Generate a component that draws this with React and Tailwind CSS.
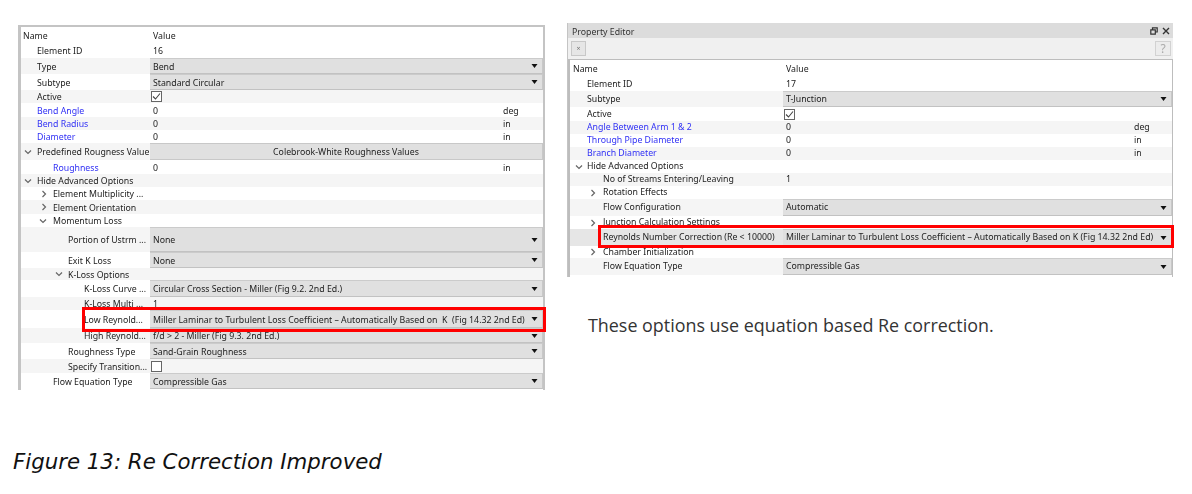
/* Figure 13: two property editor captures */
const MILLER_A = "Miller Laminar to Turbulent Loss Coefficient – Automatically Based on\u00a0 K\u00a0 (Fig 14.32 2nd Ed)";
const MILLER_B = "Miller Laminar to Turbulent Loss Coefficient – Automatically Based on K (Fig 14.32 2nd Ed)";

const leftRows = [
  { h: 15, name: "Element ID", pad: 16, val: "16" },
  { h: 16, name: "Type", pad: 16, val: "Bend", kind: "select", alt: 1 },
  { h: 16, name: "Subtype", pad: 16, val: "Standard Circular", kind: "select" },
  { h: 13, name: "Active", pad: 16, kind: "check", checked: true, alt: 1 },
  { h: 14, name: "Bend Angle", pad: 16, val: "0", unit: "deg", blue: true },
  { h: 13, name: "Bend Radius", pad: 16, val: "0", unit: "in", blue: true, alt: 1 },
  { h: 13, name: "Diameter", pad: 16, val: "0", unit: "in", blue: true },
  { h: 17, name: "Predefined Rougness Value", pad: 16, chevron: "down", chevronPad: 3, val: "Colebrook-White Roughness Values", kind: "button", alt: 1 },
  { h: 14, name: "Roughness", pad: 32, val: "0", unit: "in", blue: true },
  { h: 13, name: "Hide Advanced Options", pad: 16, chevron: "down", chevronPad: 3, alt: 1 },
  { h: 13, name: "Element Multiplicity ...", pad: 32, chevron: "right", chevronPad: 19 },
  { h: 14, name: "Element Orientation", pad: 32, chevron: "right", chevronPad: 19, alt: 1 },
  { h: 13, name: "Momentum Loss", pad: 32, chevron: "down", chevronPad: 18 },
  { h: 25, name: "Portion of Ustrm ...", pad: 47, val: "None", kind: "select", alt: 1 },
  { h: 16, name: "Exit K Loss", pad: 47, val: "None", kind: "select" },
  { h: 12, name: "K-Loss Options", pad: 47, chevron: "down", chevronPad: 34, alt: 1 },
  { h: 17, name: "K-Loss Curve ...", pad: 63, val: "Circular Cross Section - Miller (Fig 9.2. 2nd Ed.)", kind: "select" },
  { h: 13, name: "K-Loss Multi ...", pad: 63, val: "1", alt: 1 },
  { h: 18, name: "Low Reynold...", pad: 63, val: MILLER_A, kind: "select" },
  { h: 15, name: "High Reynold...", pad: 63, val: "f/d > 2 - Miller (Fig 9.3. 2nd Ed.)", kind: "select", alt: 1 },
  { h: 16, name: "Roughness Type", pad: 47, val: "Sand-Grain Roughness", kind: "select" },
  { h: 14, name: "Specify Transition...", pad: 47, kind: "check", alt: 1 },
  { h: 16, name: "Flow Equation Type", pad: 32, val: "Compressible Gas", kind: "select" },
];

const rightRows = [
  { h: 15, name: "Element ID", pad: 17, val: "17", nudge: true },
  { h: 16, name: "Subtype", pad: 17, val: "T-Junction", kind: "select", alt: 1 },
  { h: 14, name: "Active", pad: 17, kind: "check", checked: true },
  { h: 13, name: "Angle Between Arm 1 & 2", pad: 17, val: "0", unit: "deg", blue: true, alt: 1 },
  { h: 13, name: "Through Pipe Diameter", pad: 17, val: "0", unit: "in", blue: true },
  { h: 13, name: "Branch Diameter", pad: 17, val: "0", unit: "in", blue: true, alt: 1 },
  { h: 13, name: "Hide Advanced Options", pad: 17, chevron: "down", chevronPad: 5 },
  { h: 13, name: "No of Streams Entering/Leaving", pad: 33, val: "1", alt: 1 },
  { h: 13, name: "Rotation Effects", pad: 33, chevron: "right", chevronPad: 19 },
  { h: 17, name: "Flow Configuration", pad: 33, val: "Automatic", kind: "select", alt: 1 },
  { h: 13, name: "Junction Calculation Settings", pad: 33, chevron: "right", chevronPad: 19 },
  { h: 17, name: "Reynolds Number Correction (Re < 10000)", pad: 33, val: MILLER_B, kind: "select", alt: 1, shaded: true },
  { h: 12, name: "Chamber Initialization", pad: 33, chevron: "right", chevronPad: 19 },
  { h: 17, name: "Flow Equation Type", pad: 33, val: "Compressible Gas", kind: "select", alt: 1 },
];

function Chevron({ dir }) {
  return (
    <svg width="8" height="8" viewBox="0 0 8 8" fill="none" stroke="#666" strokeWidth="1.2" className="shrink-0">
      {dir === "down" ? <path d="M1 2.5 4 5.5 7 2.5" /> : <path d="M2.5 1 5.5 4 2.5 7" />}
    </svg>
  );
}

function Caret() {
  return (
    <svg width="7" height="4" viewBox="0 0 7 4" className="shrink-0">
      <path d="M0.5 0H6.5L3.5 4Z" fill="#111" />
    </svg>
  );
}

function CheckBox({ checked }) {
  return (
    <div className="w-[11px] h-[11px] ml-px border border-[#666] bg-white flex items-center justify-center">
      {checked && (
        <svg width="9" height="9" viewBox="0 0 9 9" fill="none" stroke="#444" strokeWidth="1.1">
          <path d="M1 4.5 3.5 7 8 1.5" />
        </svg>
      )}
    </div>
  );
}

function Row({ row, nameW, unitW, nudge }) {
  const bg = row.shaded ? "bg-[#e6e6e6]" : row.alt ? "bg-[#f5f5f5]" : "bg-white";
  const textCls = nudge || row.nudge ? "block pt-[2px]" : "block";
  return (
    <div className={`flex items-stretch text-[#222] ${bg}`} style={{ height: row.h }}>
      <div className="relative flex items-center shrink-0 whitespace-nowrap" style={{ width: nameW, paddingLeft: row.pad }}>
        {row.chevron && (
          <span className="absolute flex items-center" style={{ left: row.chevronPad }}>
            <Chevron dir={row.chevron} />
          </span>
        )}
        <span className={`${textCls} ${row.blue ? "text-[#3030f5]" : ""}`}>{row.name}</span>
      </div>
      <Value row={row} unitW={unitW} textCls={textCls} />
    </div>
  );
}

function Value({ row, unitW, textCls }) {
  if (row.kind === "select") {
    return (
      <div className="flex-1 min-w-0 flex items-center justify-between pl-[3px] pr-[4px] bg-[#e0e0e0] border-t border-b border-r border-t-[#cbcbcb] border-b-[#c2c2c2] border-r-[#c8c8c8] whitespace-nowrap">
        <span className={textCls}>{row.val}</span>
        <Caret />
      </div>
    );
  }
  if (row.kind === "button") {
    return (
      <div className="flex-1 min-w-0 flex items-center justify-center bg-[#e0e0e0] border-t border-b border-r border-[#c8c8c8] whitespace-nowrap">
        <span className={textCls}>{row.val}</span>
      </div>
    );
  }
  if (row.kind === "check") {
    return (
      <div className="flex-1 flex items-center">
        <CheckBox checked={row.checked} />
      </div>
    );
  }
  return (
    <div className="flex-1 min-w-0 flex items-center pl-[3px] whitespace-nowrap">
      <span className={`flex-1 ${textCls}`}>{row.val}</span>
      {row.unit && <span className={textCls} style={{ width: unitW }}>{row.unit}</span>}
    </div>
  );
}

function Header({ nameW, left }) {
  return (
    <div className="flex items-center h-[16px] pt-[2px] bg-white text-[#222]">
      <div className="shrink-0" style={{ width: nameW, paddingLeft: left }}>Name</div>
      <div className="pl-[3px]">Value</div>
    </div>
  );
}

function LeftEditor() {
  return (
    <div className="relative w-[527px] h-[365px] mt-[25px] ml-[18px] border-t-2 border-l-[3px] border-r-2 border-[#c4c4c4] bg-white [font-family:'Noto_Sans',sans-serif] text-[8.75px] leading-none">
      <div className="blur-[0.5px]">
        <Header nameW={129} left={2} />
        {leftRows.map((r) => (
          <Row key={r.name} row={r} nameW={129} unitW={40} nudge />
        ))}
      </div>
      <div className="absolute left-[61px] top-[280px] w-[464px] h-[25px] border-[3px] border-[#ff0000]" />
    </div>
  );
}

function RightEditor() {
  return (
    <div className="relative w-[606px] h-[254px] border-l border-[#c4c4c4] [font-family:'Noto_Sans',sans-serif] text-[8.75px] leading-none">
      <div className="blur-[0.5px]">
        <div className="flex items-center justify-between h-[15px] pl-[4px] pr-[3px] bg-[#dcdcdc] text-[#333]">
          <span className="pt-[3px]">Property Editor</span>
          <div className="flex items-center gap-[4px]">
            <svg width="8" height="8" viewBox="0 0 8 8" fill="none" stroke="#333" strokeWidth="1.2">
              <path d="M2.5 2.5V.8H7.2V5H5.5M.8 2.8H5.3V7.2H.8Z" />
            </svg>
            <svg width="8" height="8" viewBox="0 0 8 8" fill="none" stroke="#333" strokeWidth="1.4">
              <path d="M1 1 7 7M7 1 1 7" />
            </svg>
          </div>
        </div>
        <div className="flex items-center justify-between h-[21px] pl-[3px] pr-[2px] bg-[#f0f0f0]">
          <div className="w-[15px] h-[15px] border border-[#c8c8c8] bg-[#e6e6e6] flex items-center justify-center text-[7px] text-[#777]">×</div>
          <div className="w-[16px] h-[15px] border border-[#d2d2d2] bg-[#ececec] flex items-center justify-center text-[12px] text-[#aaa]">?</div>
        </div>
        <div className="border-t border-l-2 border-r border-[#bdbdbd] bg-white h-[218px] overflow-hidden">
          <Header nameW={213} left={3} />
          {rightRows.map((r) => (
            <Row key={r.name} row={r} nameW={213} unitW={38} />
          ))}
          <div className="pl-[5px] pt-[2px]"><Chevron dir="down" /></div>
        </div>
      </div>
      <div className="absolute left-[30px] top-[202px] w-[576px] h-[23px] border-[3px] border-[#ff0000]" />
    </div>
  );
}

export default function App() {
  return (
    <div className="w-[1192px] h-[494px] bg-white overflow-hidden">
      <div className="flex items-start h-[447px]">
        <LeftEditor />
        <div className="ml-[22px] mt-[23px]">
          <RightEditor />
          <p className="mt-[36px] ml-[21px] [font-family:'Open_Sans',sans-serif] text-[17.9px] leading-[24px] text-[#333] whitespace-nowrap">
            These options use equation based Re correction.
          </p>
        </div>
      </div>
      <p className="ml-[13px] [font-family:'DejaVu_Sans',sans-serif] italic text-[21.3px] leading-[30px] text-[#111] whitespace-nowrap">
        Figure 13: Re Correction Improved
      </p>
    </div>
  );
}
